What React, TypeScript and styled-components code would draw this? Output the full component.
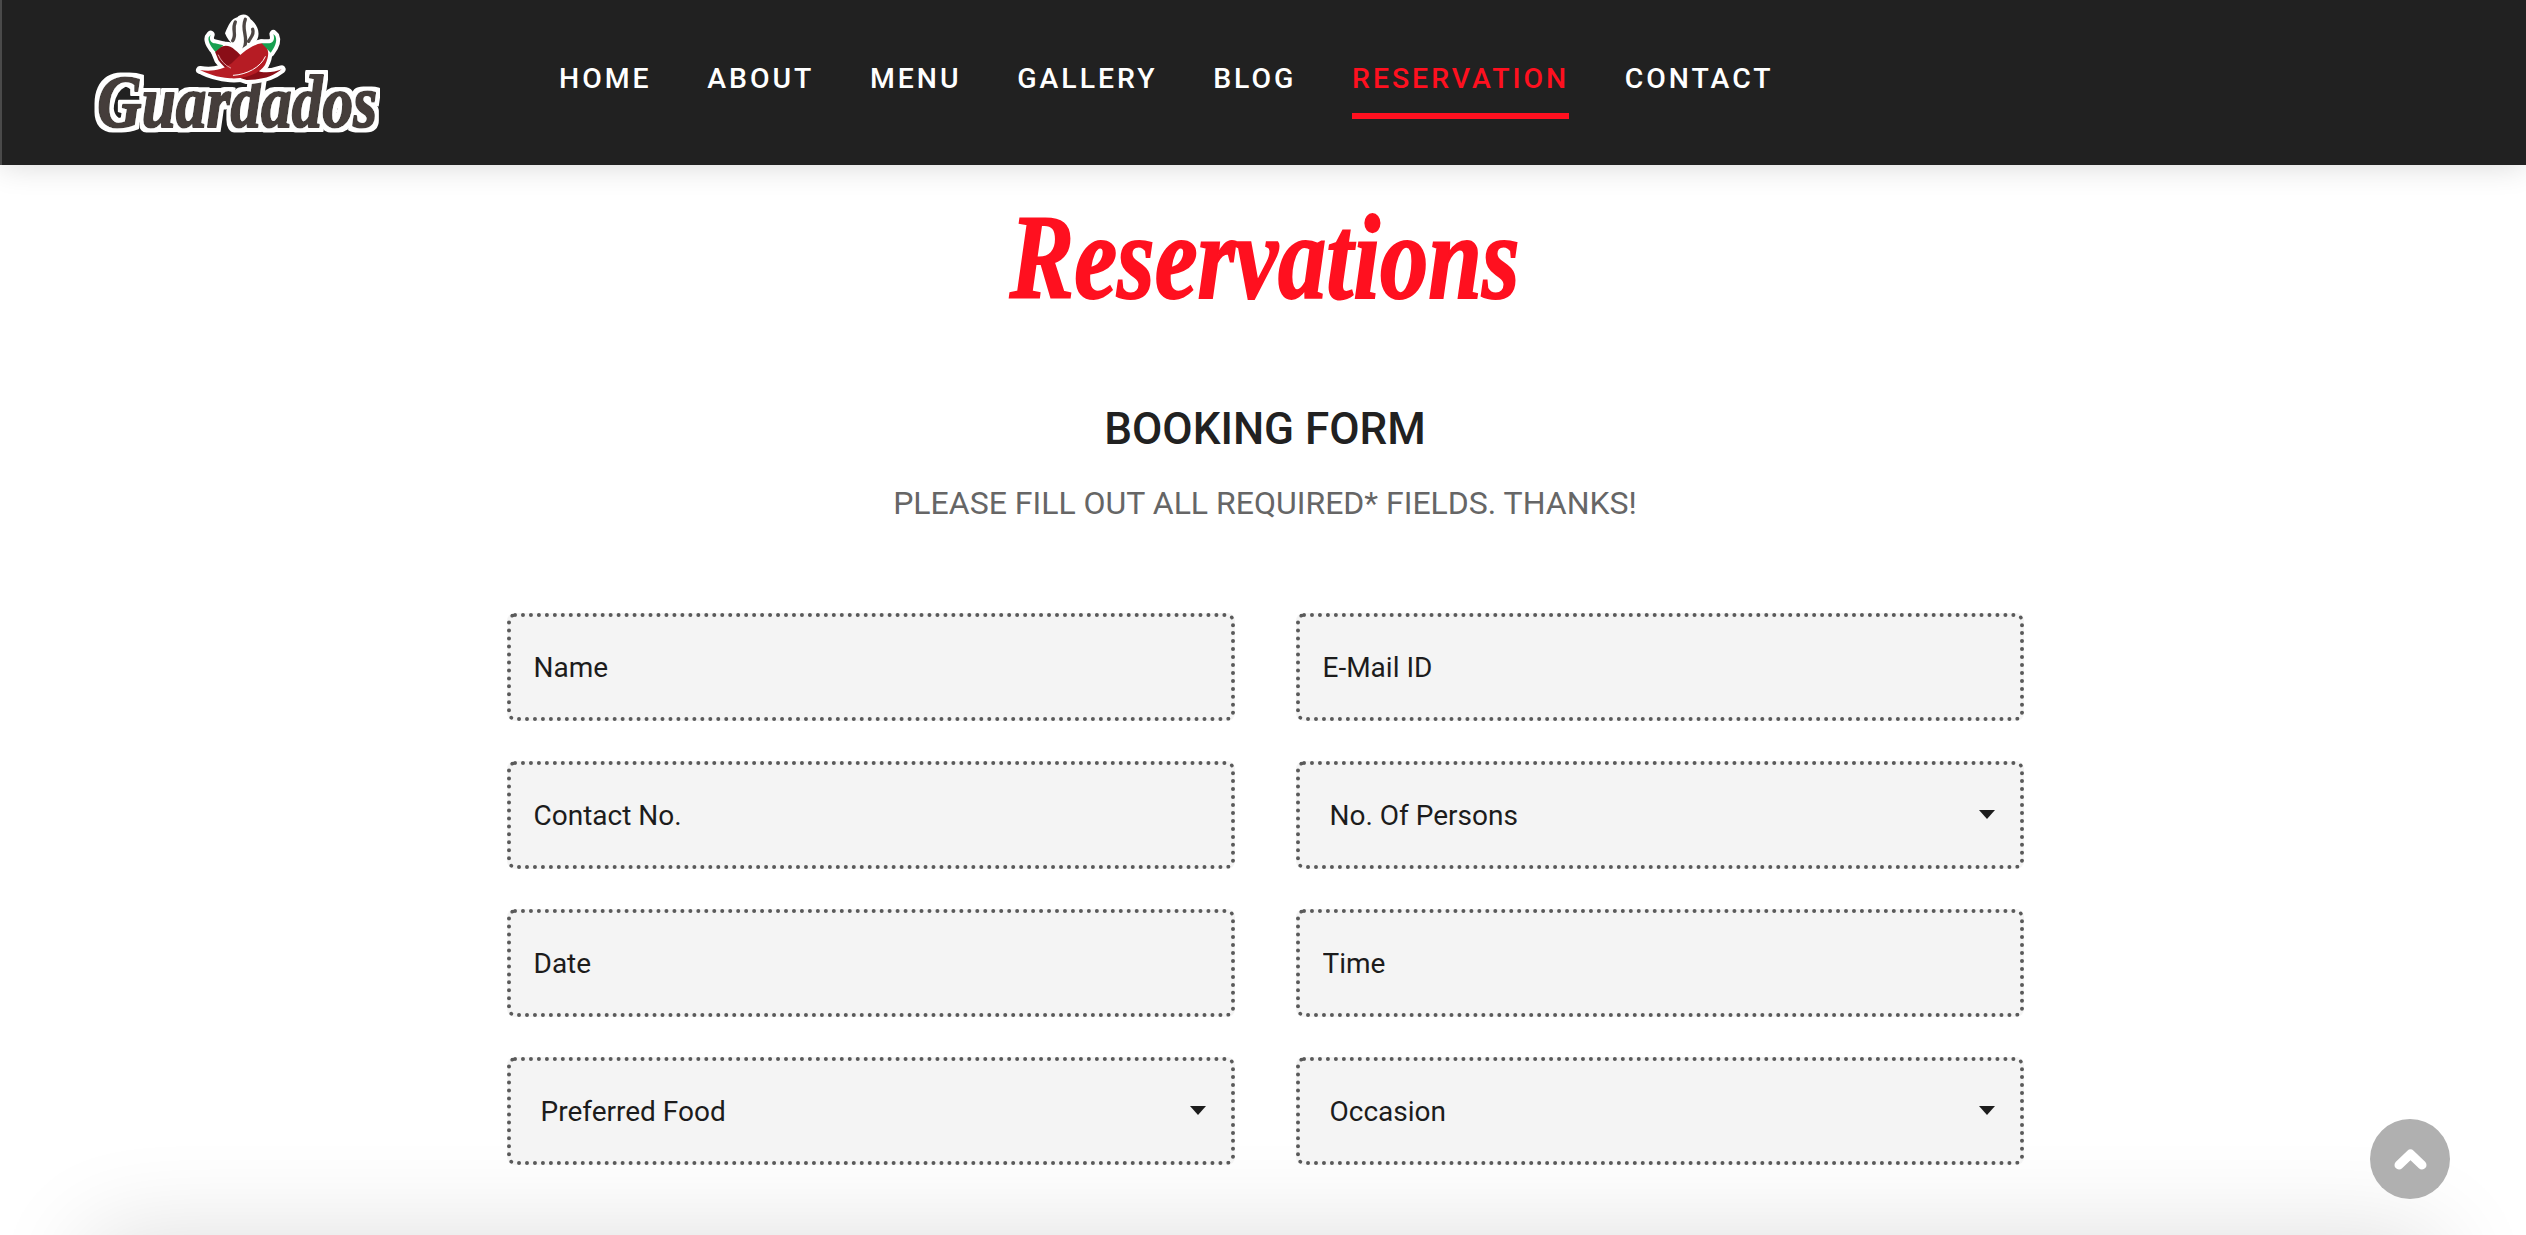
import React from 'react';
import styled, { createGlobalStyle } from 'styled-components';

const GlobalStyle = createGlobalStyle`
  html, body {
    margin: 0;
    height: 100%;
    overflow: hidden;
    background: #fff;
    font-family: Roboto, "Liberation Sans", sans-serif;
  }
`;

const navItems = ['HOME', 'ABOUT', 'MENU', 'GALLERY', 'BLOG', 'RESERVATION', 'CONTACT'];

const leftPepper = 'M645 155 C660 135 685 130 705 150 C725 165 745 195 780 215 C805 220 825 215 845 208 C820 228 790 240 740 240 C700 230 670 200 655 180 Z';
const rightPepper = 'M785 130 C805 140 812 160 795 195 C775 225 730 238 690 235 C650 232 620 220 600 210 C630 215 665 212 695 190 C720 165 750 135 785 130 Z';
const leftStem = 'M632 104 C625 120 635 130 645 130 L670 136 L646 155 C636 145 622 125 626 112 Z';
const rightStem = 'M820 102 C826 120 818 128 808 130 L785 130 L812 158 C822 145 834 125 826 108 Z';

function Logo() {
  return (
    <LogoSvg viewBox="270 30 900 420" aria-label="Guardados">
      <defs>
        <filter id="halo" x="-10%" y="-30%" width="120%" height="160%">
          <feMorphology in="SourceAlpha" operator="dilate" radius="13" result="grown" />
          <feGaussianBlur in="grown" stdDeviation="2" result="soft" />
          <feFlood floodColor="#fff" />
          <feComposite in2="soft" operator="in" result="white" />
          <feMerge>
            <feMergeNode in="white" />
            <feMergeNode in="SourceGraphic" />
          </feMerge>
        </filter>
      </defs>
      <LogoWord transform="translate(292 380) scale(0.845 1.02)" filter="url(#halo)">Guardados</LogoWord>
      {/* steam */}
      <path
        d="M675 100 C685 75 695 55 712 52 C722 40 745 40 752 58 C770 72 782 95 772 118 C764 138 745 150 735 165 C720 150 685 130 675 100 Z"
        fill="#fff"
      />
      <path d="M706 66 C694 88 712 104 698 122 M736 58 C722 92 748 112 732 146 M758 88 C764 104 750 114 746 124" fill="none" stroke="#4d4644" strokeWidth="10" strokeLinecap="round" />
      {/* white outline of the peppers */}
      <g fill="#fff" stroke="#fff" strokeWidth="24" strokeLinejoin="round">
        <path d={leftPepper} />
        <path d={rightPepper} />
        <path d={leftStem} />
        <path d={rightStem} />
      </g>
      <path d={leftPepper} fill="#8a0e17" />
      <path d={rightPepper} fill="#b61c24" />
      <path d="M700 226 C740 224 782 202 796 170" fill="none" stroke="#fff" strokeWidth="3" strokeLinecap="round" />
      <path d="M655 165 C662 182 675 196 692 204" fill="none" stroke="#e2a0a4" strokeWidth="3" strokeLinecap="round" />
      <path d={leftStem} fill="#17a050" />
      <path d={rightStem} fill="#17a050" />
    </LogoSvg>
  );
}

function App() {
  return (
    <>
      <GlobalStyle />
      <Header>
        <Logo />
        <NavList>
          {navItems.map((item) => (
            <NavLink key={item} $active={item === 'RESERVATION'}>{item}</NavLink>
          ))}
        </NavList>
      </Header>
      <Main>
        <Title><span>Reservations</span></Title>
        <FormTitle>BOOKING FORM</FormTitle>
        <FormNote>PLEASE FILL OUT ALL REQUIRED* FIELDS. THANKS!</FormNote>
        <BookingForm>
          <Field placeholder="Name" />
          <Field placeholder="E-Mail ID" />
          <Field placeholder="Contact No." />
          <SelectWrap>
            <SelectField defaultValue="">
              <option value="">No. Of Persons</option>
            </SelectField>
          </SelectWrap>
          <Field placeholder="Date" />
          <Field placeholder="Time" />
          <SelectWrap>
            <SelectField defaultValue="">
              <option value="">Preferred Food</option>
            </SelectField>
          </SelectWrap>
          <SelectWrap>
            <SelectField defaultValue="">
              <option value="">Occasion</option>
            </SelectField>
          </SelectWrap>
        </BookingForm>
      </Main>
      <Footer />
      <ScrollTop aria-label="Back to top">
        <svg width="80" height="80" viewBox="0 0 80 80">
          <path d="M29 46 L40.5 35 L52 46" fill="none" stroke="#fff" strokeWidth="9" strokeLinecap="round" strokeLinejoin="round" />
        </svg>
      </ScrollTop>
    </>
  );
}

const Header = styled.header`
  position: relative;
  z-index: 2;
  box-sizing: border-box;
  height: 165px;
  display: flex;
  align-items: flex-start;
  background: #212121;
  border-left: 2px solid #4a4a4a;
  box-shadow: 0 0 30px rgba(0, 0, 0, 0.16);
`;

const LogoSvg = styled.svg`
  display: block;
  flex: none;
  width: 300px;
  height: 140px;
  margin: 10px 0 0 88px;
`;

const LogoWord = styled.text`
  font-family: "Liberation Serif", serif;
  font-style: italic;
  font-weight: 700;
  font-size: 218px;
  fill: #443d3a;
  stroke: #443d3a;
  stroke-width: 6px;
  stroke-linejoin: round;
`;

const NavList = styled.nav`
  display: flex;
  gap: 55.6px;
  margin-left: 169px;
  padding-top: 59px;
`;

const NavLink = styled.a<{ $active?: boolean }>`
  display: block;
  height: 60px;
  box-sizing: border-box;
  font-size: 28.4px;
  line-height: 40px;
  font-weight: 500;
  letter-spacing: 3px;
  white-space: nowrap;
  color: ${(p) => (p.$active ? '#ff101f' : '#fff')};
  border-bottom: 6px solid ${(p) => (p.$active ? '#ff101f' : 'transparent')};
`;

const Main = styled.main`
  box-sizing: border-box;
  padding: 0 0 0 4px;
  display: flex;
  flex-direction: column;
  align-items: center;
`;

const Title = styled.h1`
  margin: 33px 0 0;
  height: 120px;
  font-family: "Liberation Serif", serif;
  font-style: italic;
  font-weight: 700;
  font-size: 120px;
  line-height: 120px;
  color: #ff101f;
  white-space: nowrap;

  span {
    display: inline-block;
    transform: scaleX(0.805);
    -webkit-text-stroke: 2px #ff101f;
  }
`;

const FormTitle = styled.h2`
  margin: 86px 0 0;
  font-size: 44px;
  line-height: 50px;
  font-weight: 500;
  color: #212121;
`;

const FormNote = styled.p`
  margin: 29px 0 0;
  font-size: 32px;
  line-height: 40px;
  font-weight: 400;
  color: #666;
`;

const BookingForm = styled.form`
  display: grid;
  grid-template-columns: 728px 728px;
  grid-auto-rows: 108px;
  column-gap: 61px;
  row-gap: 40px;
  margin-top: 90px;
`;

const fieldStyles = `
  box-sizing: border-box;
  width: 100%;
  height: 108px;
  margin: 0;
  border: 4px dotted #5a5a5a;
  border-radius: 8px;
  background: #f4f4f4;
  outline: none;
  font-family: Roboto, "Liberation Sans", sans-serif;
  font-size: 28px;
  color: #1c1c1c;
`;

const Field = styled.input`
  ${fieldStyles}
  padding: 0 23px;

  &::placeholder {
    color: #1c1c1c;
    opacity: 1;
  }
`;

const SelectWrap = styled.div`
  position: relative;

  &::after {
    content: '';
    position: absolute;
    right: 29px;
    top: 49px;
    border-left: 8px solid transparent;
    border-right: 8px solid transparent;
    border-top: 9px solid #1c1c1c;
    pointer-events: none;
  }
`;

const SelectField = styled.select`
  ${fieldStyles}
  display: block;
  appearance: none;
  padding: 0 30px;
`;

const Footer = styled.footer`
  height: 300px;
  margin: 72px 90px 0;
  background: #f2f2f2;
  box-shadow: 0 0 100px rgba(0, 0, 0, 0.14);
`;

const ScrollTop = styled.button`
  position: fixed;
  left: 2370px;
  top: 1119px;
  width: 80px;
  height: 80px;
  padding: 0;
  border: none;
  border-radius: 50%;
  background: #b0b0b0;

  svg {
    display: block;
  }
`;

export default App;
